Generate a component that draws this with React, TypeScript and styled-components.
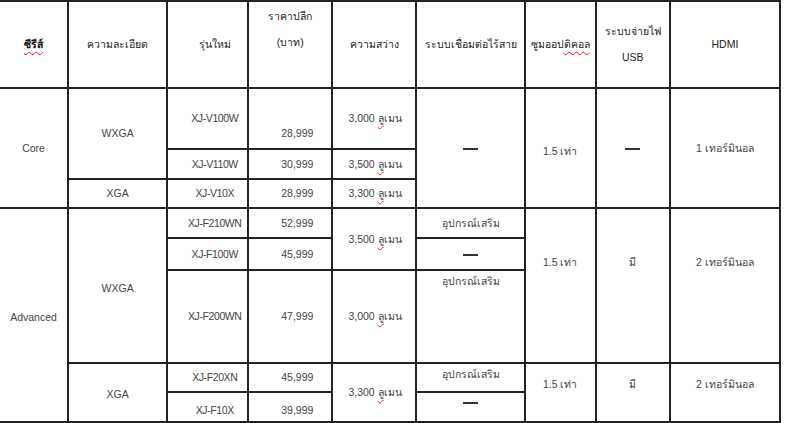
import styled, { createGlobalStyle } from 'styled-components'

const GlobalStyle = createGlobalStyle`
    html, body {
        margin: 0;
        padding: 0;
        background: #ffffff;
    }
    body {
        font-family: 'Liberation Sans', Arial, 'Noto Sans', sans-serif;
        color: #3a3a3a;
    }
`

const Table = styled.table`
    border-collapse: collapse;
    table-layout: fixed;
    width: 781px;
    font-size: 10.5px;
    line-height: 13px;
`

type CellProps = {
    $align?: 'left' | 'center' | 'right'
    $valign?: 'top' | 'middle' | 'bottom'
    $pad?: string
    $first?: boolean
}

const Th = styled.th<CellProps>`
    border: 2px solid #222222;
    border-left: ${(p) => (p.$first ? 'none' : '2px solid #222222')};
    font-weight: 400;
    color: #1c1c1c;
    text-align: ${(p) => p.$align || 'center'};
    vertical-align: ${(p) => p.$valign || 'middle'};
    padding: ${(p) => p.$pad || '0'};
    white-space: nowrap;
`

const Td = styled.td<CellProps>`
    border: 2px solid #222222;
    border-left: ${(p) => (p.$first ? 'none' : '2px solid #222222')};
    color: #444444;
    text-align: ${(p) => p.$align || 'center'};
    vertical-align: ${(p) => p.$valign || 'middle'};
    padding: ${(p) => p.$pad || '0'};
    white-space: nowrap;
`

const Row = styled.tr<{ $h: number }>`
    height: ${(p) => p.$h}px;
`

const Bold = styled.span`
    font-weight: 700;
    color: #111111;
`

const Model = styled.span`
    letter-spacing: -0.4px;
`

const Squiggle = styled.span`
    text-decoration: underline wavy #e02020;
    text-decoration-thickness: 1px;
    text-underline-offset: 3px;
`

const Dash = styled.span`
    display: inline-block;
    width: 15px;
    height: 2px;
    background: #333333;
    vertical-align: middle;
`

const Lumen = ({ value }: { value: string }) => (
    <>
        {value} <Squiggle>ลู</Squiggle>เมน
    </>
)

const widths = [68, 99, 81, 84, 84, 108, 71, 74, 110]

const MODEL_PAD = '0 0 0 14px'
const PRICE_PAD = '0 18px 0 0'
const LUMEN_PAD = '0 0 0 15px'

export default function App() {
    return (
        <>
            <GlobalStyle />
            <Table>
                <colgroup>
                    {widths.map((w, i) => (
                        <col key={i} style={{ width: w }} />
                    ))}
                </colgroup>
                <thead>
                    <Row $h={87}>
                        <Th $first>
                            <Bold>
                                <Squiggle>ซีรีส์</Squiggle>
                            </Bold>
                        </Th>
                        <Th>ความละเอียด</Th>
                        <Th $pad="0 0 0 14px">รุ่นใหม่</Th>
                        <Th $valign="top" $pad="8px 0 0 0">
                            ราคาปลีก
                            <br />
                            <br />
                            (บาท)
                        </Th>
                        <Th>ความสว่าง</Th>
                        <Th>ระบบเชื่อมต่อไร้สาย</Th>
                        <Th>
                            ซูมออป<Squiggle>ติคอล</Squiggle>
                        </Th>
                        <Th>
                            ระบบจ่ายไฟ
                            <br />
                            <br />
                            USB
                        </Th>
                        <Th>HDMI</Th>
                    </Row>
                </thead>
                <tbody>
                    <Row $h={61}>
                        <Td $first rowSpan={3}>
                            Core
                        </Td>
                        <Td rowSpan={2}>WXGA</Td>
                        <Td $pad={MODEL_PAD}>
                            <Model>XJ-V100W</Model>
                        </Td>
                        <Td $align="right" $valign="bottom" $pad="0 18px 8px 0">
                            28,999
                        </Td>
                        <Td $align="left" $pad={LUMEN_PAD}>
                            <Lumen value="3,000" />
                        </Td>
                        <Td rowSpan={3}>
                            <Dash />
                        </Td>
                        <Td rowSpan={3} $pad="6px 0 0 0">
                            1.5 เท่า
                        </Td>
                        <Td rowSpan={3}>
                            <Dash />
                        </Td>
                        <Td rowSpan={3}>1 เทอร์มินอล</Td>
                    </Row>
                    <Row $h={30}>
                        <Td $pad={MODEL_PAD}>
                            <Model>XJ-V110W</Model>
                        </Td>
                        <Td $align="right" $pad={PRICE_PAD}>
                            30,999
                        </Td>
                        <Td $align="left" $pad={LUMEN_PAD}>
                            <Lumen value="3,500" />
                        </Td>
                    </Row>
                    <Row $h={29}>
                        <Td>XGA</Td>
                        <Td $pad={MODEL_PAD}>
                            <Model>XJ-V10X</Model>
                        </Td>
                        <Td $align="right" $pad={PRICE_PAD}>
                            28,999
                        </Td>
                        <Td $align="left" $pad={LUMEN_PAD}>
                            <Lumen value="3,300" />
                        </Td>
                    </Row>

                    <Row $h={30}>
                        <Td $first rowSpan={5} $pad="4px 0 0 0">
                            Advanced
                        </Td>
                        <Td rowSpan={3} $pad="6px 0 0 0">
                            WXGA
                        </Td>
                        <Td $pad={MODEL_PAD}>
                            <Model>XJ-F210WN</Model>
                        </Td>
                        <Td $align="right" $pad={PRICE_PAD}>
                            52,999
                        </Td>
                        <Td rowSpan={2} $align="left" $pad={LUMEN_PAD}>
                            <Lumen value="3,500" />
                        </Td>
                        <Td>อุปกรณ์เสริม</Td>
                        <Td rowSpan={3} $pad="0 0 46px 0">
                            1.5 เท่า
                        </Td>
                        <Td rowSpan={3} $pad="0 0 46px 0">
                            มี
                        </Td>
                        <Td rowSpan={3} $pad="0 0 46px 0">
                            2 เทอร์มินอล
                        </Td>
                    </Row>
                    <Row $h={32}>
                        <Td $pad={MODEL_PAD}>
                            <Model>XJ-F100W</Model>
                        </Td>
                        <Td $align="right" $pad={PRICE_PAD}>
                            45,999
                        </Td>
                        <Td>
                            <Dash />
                        </Td>
                    </Row>
                    <Row $h={93}>
                        <Td $pad={MODEL_PAD}>
                            <Model>XJ-F200WN</Model>
                        </Td>
                        <Td $align="right" $pad={PRICE_PAD}>
                            47,999
                        </Td>
                        <Td $align="left" $pad={LUMEN_PAD}>
                            <Lumen value="3,000" />
                        </Td>
                        <Td $valign="top" $pad="4px 0 0 0">
                            อุปกรณ์เสริม
                        </Td>
                    </Row>

                    <Row $h={29}>
                        <Td rowSpan={2} $pad="4px 0 0 0">
                            XGA
                        </Td>
                        <Td $pad={MODEL_PAD}>
                            <Model>XJ-F20XN</Model>
                        </Td>
                        <Td $align="right" $pad={PRICE_PAD}>
                            45,999
                        </Td>
                        <Td rowSpan={2} $align="left" $pad={LUMEN_PAD}>
                            <Lumen value="3,300" />
                        </Td>
                        <Td $pad="0 0 6px 0">อุปกรณ์เสริม</Td>
                        <Td rowSpan={2} $pad="0 0 16px 0">
                            1.5 เท่า
                        </Td>
                        <Td rowSpan={2} $pad="0 0 16px 0">
                            มี
                        </Td>
                        <Td rowSpan={2} $pad="0 0 16px 0">
                            2 เทอร์มินอล
                        </Td>
                    </Row>
                    <Row $h={30}>
                        <Td $pad="6px 0 0 14px">
                            <Model>XJ-F10X</Model>
                        </Td>
                        <Td $align="right" $pad="6px 18px 0 0">
                            39,999
                        </Td>
                        <Td $pad="0 0 10px 0">
                            <Dash />
                        </Td>
                    </Row>
                </tbody>
            </Table>
        </>
    )
}
